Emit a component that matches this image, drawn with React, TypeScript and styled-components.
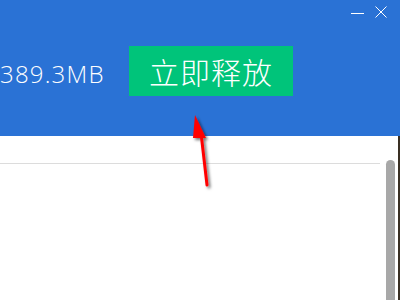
import React from "react";
import styled, { createGlobalStyle } from "styled-components";

const Global = createGlobalStyle`
  html, body { margin: 0; padding: 0; background: #ffffff; }
  body { font-family: "Liberation Sans", "Noto Sans CJK SC", sans-serif; }
`;

const Window = styled.div`
  position: relative;
  width: 400px;
  height: 300px;
  overflow: hidden;
  display: flex;
  flex-direction: column;
`;

const Header = styled.header`
  flex: 0 0 136px;
  background: #2a72d5;
  display: flex;
  flex-direction: column;
`;

const Controls = styled.div`
  height: 46px;
  display: flex;
  justify-content: flex-end;
  align-items: flex-start;
  padding: 5px 12px 0 0;
  gap: 10px;
  box-sizing: border-box;
`;

const CtrlBtn = styled.button`
  width: 14px;
  height: 14px;
  padding: 0;
  border: none;
  background: transparent;
  display: flex;
  align-items: center;
  justify-content: center;
  cursor: pointer;
`;

const Summary = styled.div`
  display: flex;
  align-items: center;
`;

const Size = styled.span`
  color: #ffffff;
  font-family: "Open Sans", "Liberation Sans", sans-serif;
  font-weight: 300;
  font-size: 24px;
  letter-spacing: 1.2px;
  width: 129px;
  margin-top: 4px;
  white-space: nowrap;
`;

const Release = styled.button`
  width: 164px;
  height: 50px;
  border: none;
  background: #00c47a;
  color: #ffffff;
  font-family: "Noto Sans CJK SC", sans-serif;
  font-weight: 300;
  font-size: 30px;
  letter-spacing: 1px;
  padding: 0;
  display: flex;
  align-items: center;
  justify-content: center;
`;

const Body = styled.main`
  flex: 1 1 auto;
  min-height: 0;
  overflow: hidden;
  display: flex;
  background: #ffffff;
  border-right: 2px solid #3a3024;
`;

const List = styled.div`
  flex: 1;
  padding-top: 27px;
  padding-right: 6px;
`;

const Divider = styled.div`
  height: 1px;
  background: #dcdcdc;
`;

const Track = styled.div`
  width: 12px;
  padding-top: 24px;
  display: flex;
  justify-content: flex-start;
`;

const Thumb = styled.div`
  width: 9px;
  height: 200px;
  background: #a8a8a8;
  border-radius: 5px 5px 0 0;
`;

const Annotation = styled.svg`
  position: absolute;
  left: 180px;
  top: 105px;
  overflow: visible;
`;

export default function App() {
  return (
    <>
      <Global />
      <Window>
        <Header>
          <Controls>
            <CtrlBtn aria-label="minimize">
              <svg width="13" height="13" viewBox="0 0 13 13">
                <line x1="0" y1="7.5" x2="13" y2="7.5" stroke="#fff" strokeWidth="1" />
              </svg>
            </CtrlBtn>
            <CtrlBtn aria-label="close">
              <svg width="12" height="12" viewBox="0 0 12 12">
                <path d="M0.5 0.5 L11.5 11.5 M11.5 0.5 L0.5 11.5" stroke="#fff" strokeWidth="1" />
              </svg>
            </CtrlBtn>
          </Controls>
          <Summary>
            <Size>389.3MB</Size>
            <Release>立即释放</Release>
          </Summary>
        </Header>
        <Body>
          <List>
            <Divider />
          </List>
          <Track>
            <Thumb />
          </Track>
        </Body>
        <Annotation width="40" height="90" viewBox="0 0 40 90">
          <defs>
            <filter id="sh" x="-50%" y="-50%" width="200%" height="200%">
              <feDropShadow dx="2" dy="2" stdDeviation="1.5" floodColor="#000" floodOpacity="0.55" />
            </filter>
          </defs>
          <g filter="url(#sh)">
            <line x1="27" y1="80" x2="21" y2="28" stroke="#ff0000" strokeWidth="3" strokeLinecap="round" />
            <polygon points="15,10 26,33 13,33" fill="#ff0000" />
          </g>
        </Annotation>
      </Window>
    </>
  );
}
